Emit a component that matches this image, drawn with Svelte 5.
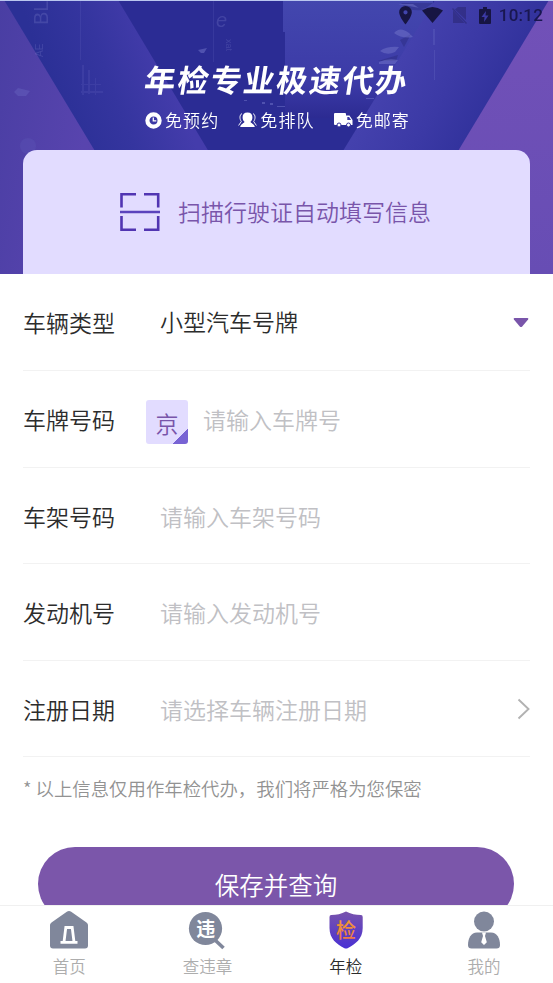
<script lang="ts">
	type Field = {
		label: string;
		value?: string;
		placeholder?: string;
		kind: 'select' | 'plate' | 'text' | 'date';
	};

	const fields: Field[] = [
		{ label: '车辆类型', value: '小型汽车号牌', kind: 'select' },
		{ label: '车牌号码', placeholder: '请输入车牌号', kind: 'plate' },
		{ label: '车架号码', placeholder: '请输入车架号码', kind: 'text' },
		{ label: '发动机号', placeholder: '请输入发动机号', kind: 'text' },
		{ label: '注册日期', placeholder: '请选择车辆注册日期', kind: 'date' }
	];

	const tabs = [
		{ id: 'home', label: '首页' },
		{ id: 'search', label: '查违章' },
		{ id: 'check', label: '年检' },
		{ id: 'me', label: '我的' }
	];

	let active = 'check';
</script>

<div class="page">
	<header class="banner">
		<svg class="backdrop" viewBox="0 0 553 274" preserveAspectRatio="none" aria-hidden="true">
			<defs>
				<linearGradient id="left" x1="0" y1="0" x2="1" y2="0.3">
					<stop offset="0" stop-color="#493ea3" />
					<stop offset="0.6" stop-color="#5844ae" />
					<stop offset="1" stop-color="#5742a8" />
				</linearGradient>
				<linearGradient id="bandLeft" gradientUnits="userSpaceOnUse" x1="55" y1="100" x2="165" y2="60">
					<stop offset="0" stop-color="#2b3096" />
					<stop offset="0.5" stop-color="#35359f" />
					<stop offset="1" stop-color="#443cab" />
				</linearGradient>
				<linearGradient id="bandRight" gradientUnits="userSpaceOnUse" x1="390" y1="75" x2="490" y2="133">
					<stop offset="0" stop-color="#4441ad" />
					<stop offset="0.5" stop-color="#3b39a5" />
					<stop offset="1" stop-color="#2f309a" />
				</linearGradient>
				<linearGradient id="right" x1="0" y1="0" x2="0" y2="1">
					<stop offset="0" stop-color="#7251b8" />
					<stop offset="1" stop-color="#674db4" />
				</linearGradient>
				<linearGradient id="tower" x1="0" y1="0" x2="0" y2="1">
					<stop offset="0" stop-color="#4347ae" />
					<stop offset="0.7" stop-color="#3c3aa7" />
					<stop offset="1" stop-color="#2c2b92" />
				</linearGradient>
			</defs>
			<rect width="553" height="274" fill="#2b2c94" />
			<rect x="268" width="165" height="118" fill="url(#tower)" />
			<path d="M267 0h1v118h-1zM268 0h15v32h2v86h-17z" fill="#2b2c94" />
			<path d="M0 0H118L282 274H0z" fill="url(#bandLeft)" />
			<path d="M0 0H4L169 274H0z" fill="url(#left)" />
			<path d="M435 0H553V274H268z" fill="url(#bandRight)" />
			<path d="M549 0H553V274H384z" fill="url(#right)" />
			<path d="M396 3h37l-10 7q-14 2-22-7zM400 40l11-6-7 13zM378 61l20-6-2 6z" fill="#2c2b82" opacity=".5" />
			<g fill="#7477cb" opacity=".5">
				<path d="M198 50l9-2-3 5h-3zM394 33q6-7 15 0l4 4q-11 2-19-4zM380 51q7-5 19-4l-4 5q-8 4-15-1zM379 62q8-4 19-2l-3 4h-16z" />
				<path d="M398 4h15l6 4h18v1l-17-1z" />
				<path d="M244 100h3v1h-3zM262 102h3v2h-3zM270 103h3v2h-3zM277 106h8v1h-8zM366 98h8v1h-8z" />
				<path d="M14 92l4-4 12 3-4 5h-8z" opacity=".6" />
				<path d="M433 29h2v16h-2zM434 50h1v30h-1z" opacity=".5" />
			</g>
			<g fill="#6365bd" opacity=".22">
				<path d="M82 65h2v30h-2zM88 70h2v24h-2zM95 78h1v17h-1zM81 84h20v1h-20zM81 91h22v2h-22z" />
				<path d="M213 0h1v62h-1zM80 0h1v60h-1z" />
				<circle cx="28" cy="146" r="8" />
			</g>
			<g fill="#787bc8" opacity=".3" font-family="Liberation Sans, sans-serif">
				<text transform="translate(48 25) rotate(-90)" font-size="20">BL</text>
				<text transform="translate(43 57) rotate(-90)" font-size="10">AE</text>
				<text x="216" y="27" font-size="20" font-style="italic">e</text>
				<text transform="translate(226 39) rotate(90)" font-size="9">xat</text>
			</g>
			<rect width="553" height="1" fill="#b9c6ef" />
		</svg>

		<div class="status">
			<svg class="pin" width="13" height="19" viewBox="0 0 12 18">
				<path fill-rule="evenodd" d="M6 0a6 6 0 0 0-6 6c0 4.400 6 11.500 6 11.500S12 10.400 12 6a6 6 0 0 0-6-6zm0 4a2 2 0 1 1 0 4 2 2 0 0 1 0-4z" />
			</svg>
			<svg class="wifi" width="21" height="16" viewBox="0 0 21 16"><path d="M0 3.500Q10.500-3.500 21 3.500L10.500 16z" /></svg>
			<svg class="faint" width="16" height="17" viewBox="0 0 16 17">
				<path d="M6 0h8v13L3 2.500zM1 3.500L12.500 16H1zM1 1l14 15-1 1L0 2z" />
			</svg>
			<svg class="battery" width="12" height="17" viewBox="0 0 12 17">
				<path fill-rule="evenodd" d="M4 0h4v2h3q1 0 1 1v13q0 1-1 1H1q-1 0-1-1V3q0-1 1-1h3zM7 4L2.500 10H5.500L5 15 9.500 8.500H6.500z" />
			</svg>
			<span class="clock">10:12</span>
		</div>

		<h1>年检专业极速代办</h1>

		<ul class="perks">
			<li>
				<svg width="17" height="17" viewBox="0 0 17 17">
					<circle cx="8.500" cy="8.500" r="6.100" fill="none" stroke="#fff" stroke-width="4.200" />
					<path d="M8.300 5.500v3.300h3" fill="none" stroke="#fff" stroke-width="1.300" />
				</svg>
				<span>免预约</span>
			</li>
			<li>
				<svg width="19" height="16" viewBox="0 0 19 16">
					<path d="M9.500 0.500c-3.300 0-4.900 2-4.900 4.700 0 2 .7 3.600 1.900 4.600 0 1.300-3.800 2-4.300 5.200h14.600c-.5-3.200-4.300-3.900-4.300-5.200 1.200-1 1.900-2.600 1.900-4.600 0-2.700-1.600-4.700-4.900-4.700z" fill="#fff" />
					<path d="M4 1.500C1.300 3 1.500 7 3.300 9.500L.6 13.500M15 1.500c2.700 1.500 2.500 5.500.7 8l2.700 4" fill="none" stroke="#fff" stroke-width=".9" />
				</svg>
				<span>免排队</span>
			</li>
			<li>
				<svg width="19" height="15" viewBox="0 0 19 15">
					<path d="M1 0h10q1 0 1 1v1.500h3.500L18.500 7v5H1q-1 0-1-1V1q0-1 1-1z" fill="#fff" />
					<path d="M13.300 4h1.800l2 3h-3.800z" fill="#3d39a5" />
					<circle cx="5" cy="12" r="2" fill="#fff" stroke="#35339b" />
					<circle cx="14.500" cy="12" r="2" fill="#fff" stroke="#35339b" />
				</svg>
				<span>免邮寄</span>
			</li>
		</ul>

		<button class="scan">
			<svg width="40" height="40" viewBox="0 0 40 40" fill="none" stroke-width="2.600">
				<path d="M1.500 15.500V2.300H16M24 2.300h14.200v13.200M1.500 24v13.700H16M24 37.700h14.200V24" stroke="#5135b2" />
				<path d="M0 20h40" stroke="#5b43bd" stroke-width="2.400" />
			</svg>
			<span>扫描行驶证自动填写信息</span>
		</button>
	</header>

	<main>
		{#each fields as field}
			<div class="row">
				<span class="label">{field.label}</span>
				{#if field.kind === 'plate'}
					<span class="province">京</span>
				{/if}
				<span class={field.value ? 'value' : 'value empty'}>{field.value ?? field.placeholder}</span>
				{#if field.kind === 'select'}
					<svg class="caret" width="18" height="11" viewBox="0 0 18 11">
						<path d="M2.500 1h13q1.500.3.600 1.500L10 9.700q-1 .8-2 0L1.900 2.500Q1 1.300 2.500 1z" fill="#7955aa" />
					</svg>
				{:else if field.kind === 'date'}
					<svg class="chevron" width="13" height="22" viewBox="0 0 13 22">
						<path d="M1.500 1.500L11.500 11l-10 9.500" fill="none" stroke="#b2b2b2" stroke-width="1.900" />
					</svg>
				{/if}
			</div>
		{/each}

		<p class="note">* 以上信息仅用作年检代办，我们将严格为您保密</p>
		<button class="submit">保存并查询</button>
	</main>

	<nav>
		{#each tabs as tab}
			<button class="tab" class:active={active === tab.id} on:click={() => (active = tab.id)}>
				<svg width="40" height="40" viewBox="0 0 40 40">
					{#if tab.id === 'home'}
						<path d="M17.800 1.800q2.200-1.600 4.400 0L37.500 12.500q1.500 1 1.500 2.500v20.500q0 3-3 3H4q-3 0-3-3V15q0-1.500 1.500-2.500z" fill="#80879b" />
						<path d="M11.500 32.300h17M15 32l1.800-14.500h6.400L25 32" fill="none" stroke="#fff" stroke-width="2.800" />
					{:else if tab.id === 'search'}
						<path d="M28 30l8.500 8" stroke="#80879b" stroke-width="3.600" />
						<circle cx="18.500" cy="18.500" r="16.600" fill="#80879b" />
						<text x="18.700" y="25.500" class="glyph" fill="#fff">违</text>
					{:else if tab.id === 'check'}
						<defs>
							<linearGradient id="shield" x1="0" y1="0" x2="0" y2="1">
								<stop offset="0" stop-color="#7853ac" />
								<stop offset="1" stop-color="#4930d4" />
							</linearGradient>
							<linearGradient id="gold" x1="0" y1="0" x2="0" y2="1">
								<stop offset="0" stop-color="#f5a52b" />
								<stop offset="1" stop-color="#ed7047" />
							</linearGradient>
						</defs>
						<path d="M20 1.500Q27 5 35 5q1.700 0 1.700 2v11c0 11-7.500 16-14.700 20q-2 1.200-4 0C10.800 34 3.500 29 3.500 18V7q0-2 1.700-2 7.800 0 14.800-3.500z" fill="url(#shield)" />
						<text x="20" y="27.500" class="glyph gold" fill="url(#gold)">检</text>
					{:else}
						<circle cx="20" cy="11.500" r="10" fill="#80879b" />
						<path d="M13 22.500h14c6 0 9 6 9 12.500q0 3.500-3.500 3.500h-25Q4 38.500 4 35c0-6.500 3-12.500 9-12.500z" fill="#80879b" />
						<path d="M18 22.500h4l-1 3.500 1.800 6.200L20 35l-2.800-2.800L19 26z" fill="#fff" />
					{/if}
				</svg>
				<span>{tab.label}</span>
			</button>
		{/each}
	</nav>
</div>

<style>
	:global(body) {
		margin: 0;
		background: #fff;
	}

	.page {
		display: flex;
		flex-direction: column;
		height: 983px;
		overflow: hidden;
		font-family: 'Noto Sans CJK SC', sans-serif;
		font-weight: 350;
		color: #2c2c2c;
	}

	button {
		border: none;
		padding: 0;
		margin: 0;
		background: none;
		font: inherit;
		color: inherit;
		cursor: pointer;
	}

	svg {
		display: block;
		flex: none;
	}

	.banner {
		position: relative;
		flex: none;
		display: flex;
		flex-direction: column;
		height: 274px;
	}

	.banner > :not(.backdrop) {
		z-index: 1;
	}

	.backdrop {
		position: absolute;
		inset: 0;
		width: 100%;
		height: 100%;
	}

	.status {
		display: flex;
		align-items: center;
		justify-content: flex-end;
		height: 30px;
		padding-right: 10px;
		color: #191750;
		fill: #171543;
	}

	.pin {
		margin-right: 10px;
	}

	.wifi {
		margin-right: 9px;
	}

	.faint {
		margin-right: 11px;
		opacity: 0.3;
	}

	.battery {
		margin-right: 8px;
	}

	.clock {
		font: 500 17px/30px Roboto, sans-serif;
		letter-spacing: 0.2px;
	}

	h1 {
		margin: 28px 0 0 145px;
		height: 42px;
		width: max-content;
		font-size: 31px;
		font-weight: 700;
		line-height: 42px;
		letter-spacing: 2px;
		color: #fff;
		transform: skewX(-9deg);
	}

	.perks {
		display: flex;
		gap: 19px;
		height: 24px;
		margin: 8px 0 0 145px;
		padding: 0;
		list-style: none;
		color: #fff;
		font-size: 17px;
		line-height: 24px;
		letter-spacing: 1.1px;
	}

	.perks li {
		display: flex;
		align-items: center;
		gap: 3px;
	}

	.scan {
		display: flex;
		align-items: center;
		justify-content: center;
		gap: 18px;
		height: 124px;
		margin: auto 23px 0;
		padding-right: 2px;
		border-radius: 14px 14px 0 0;
		background: #e2dcff;
		color: #7955aa;
		font-size: 23px;
	}

	.scan span {
		margin-bottom: 2px;
	}

	main {
		flex: 1;
		min-height: 0;
		overflow: hidden;
		padding: 0 23px;
	}

	.row {
		display: flex;
		align-items: center;
		box-sizing: border-box;
		height: 96.6px;
		padding-top: 1px;
		border-bottom: 1px solid #f2f2f2;
		font-size: 23px;
		line-height: 34px;
	}

	.row:first-child {
		height: 97px;
		padding-top: 0;
	}

	.label {
		width: 137px;
	}

	.value {
		flex: 1;
	}

	.row:first-child .value {
		margin-bottom: 2px;
	}

	.empty {
		color: #c0c0c4;
	}

	.province {
		width: 42px;
		height: 44px;
		margin: 5px 15px 0 -14px;
		border-radius: 3px;
		background: linear-gradient(135deg, transparent 82%, #7863d4 82%) #e2dcff;
		color: #7955aa;
		line-height: 46px;
		text-align: center;
	}

	.note {
		margin: 17px 0 0;
		font-size: 18.4px;
		line-height: 28px;
		color: #929292;
	}

	.submit {
		display: block;
		width: 476px;
		height: 74px;
		margin: 45px 0 0 15px;
		border-radius: 37px;
		background: #7b56aa;
		color: #fff;
		font-size: 24.500px;
	}

	nav {
		flex: none;
		display: flex;
		box-sizing: border-box;
		height: 78px;
		border-top: 1px solid #f0f0f0;
		background: #fff;
	}

	.tab {
		flex: 1;
		display: flex;
		flex-direction: column;
		align-items: center;
		padding-top: 4px;
		font-size: 16.500px;
		line-height: 24px;
		color: #adadad;
	}

	.tab span {
		margin-top: 4px;
	}

	.tab.active {
		color: #2c2c2c;
	}

	.glyph {
		font-size: 19px;
		font-weight: 700;
		text-anchor: middle;
	}

	.gold {
		font-size: 20px;
		font-weight: 500;
	}
</style>
